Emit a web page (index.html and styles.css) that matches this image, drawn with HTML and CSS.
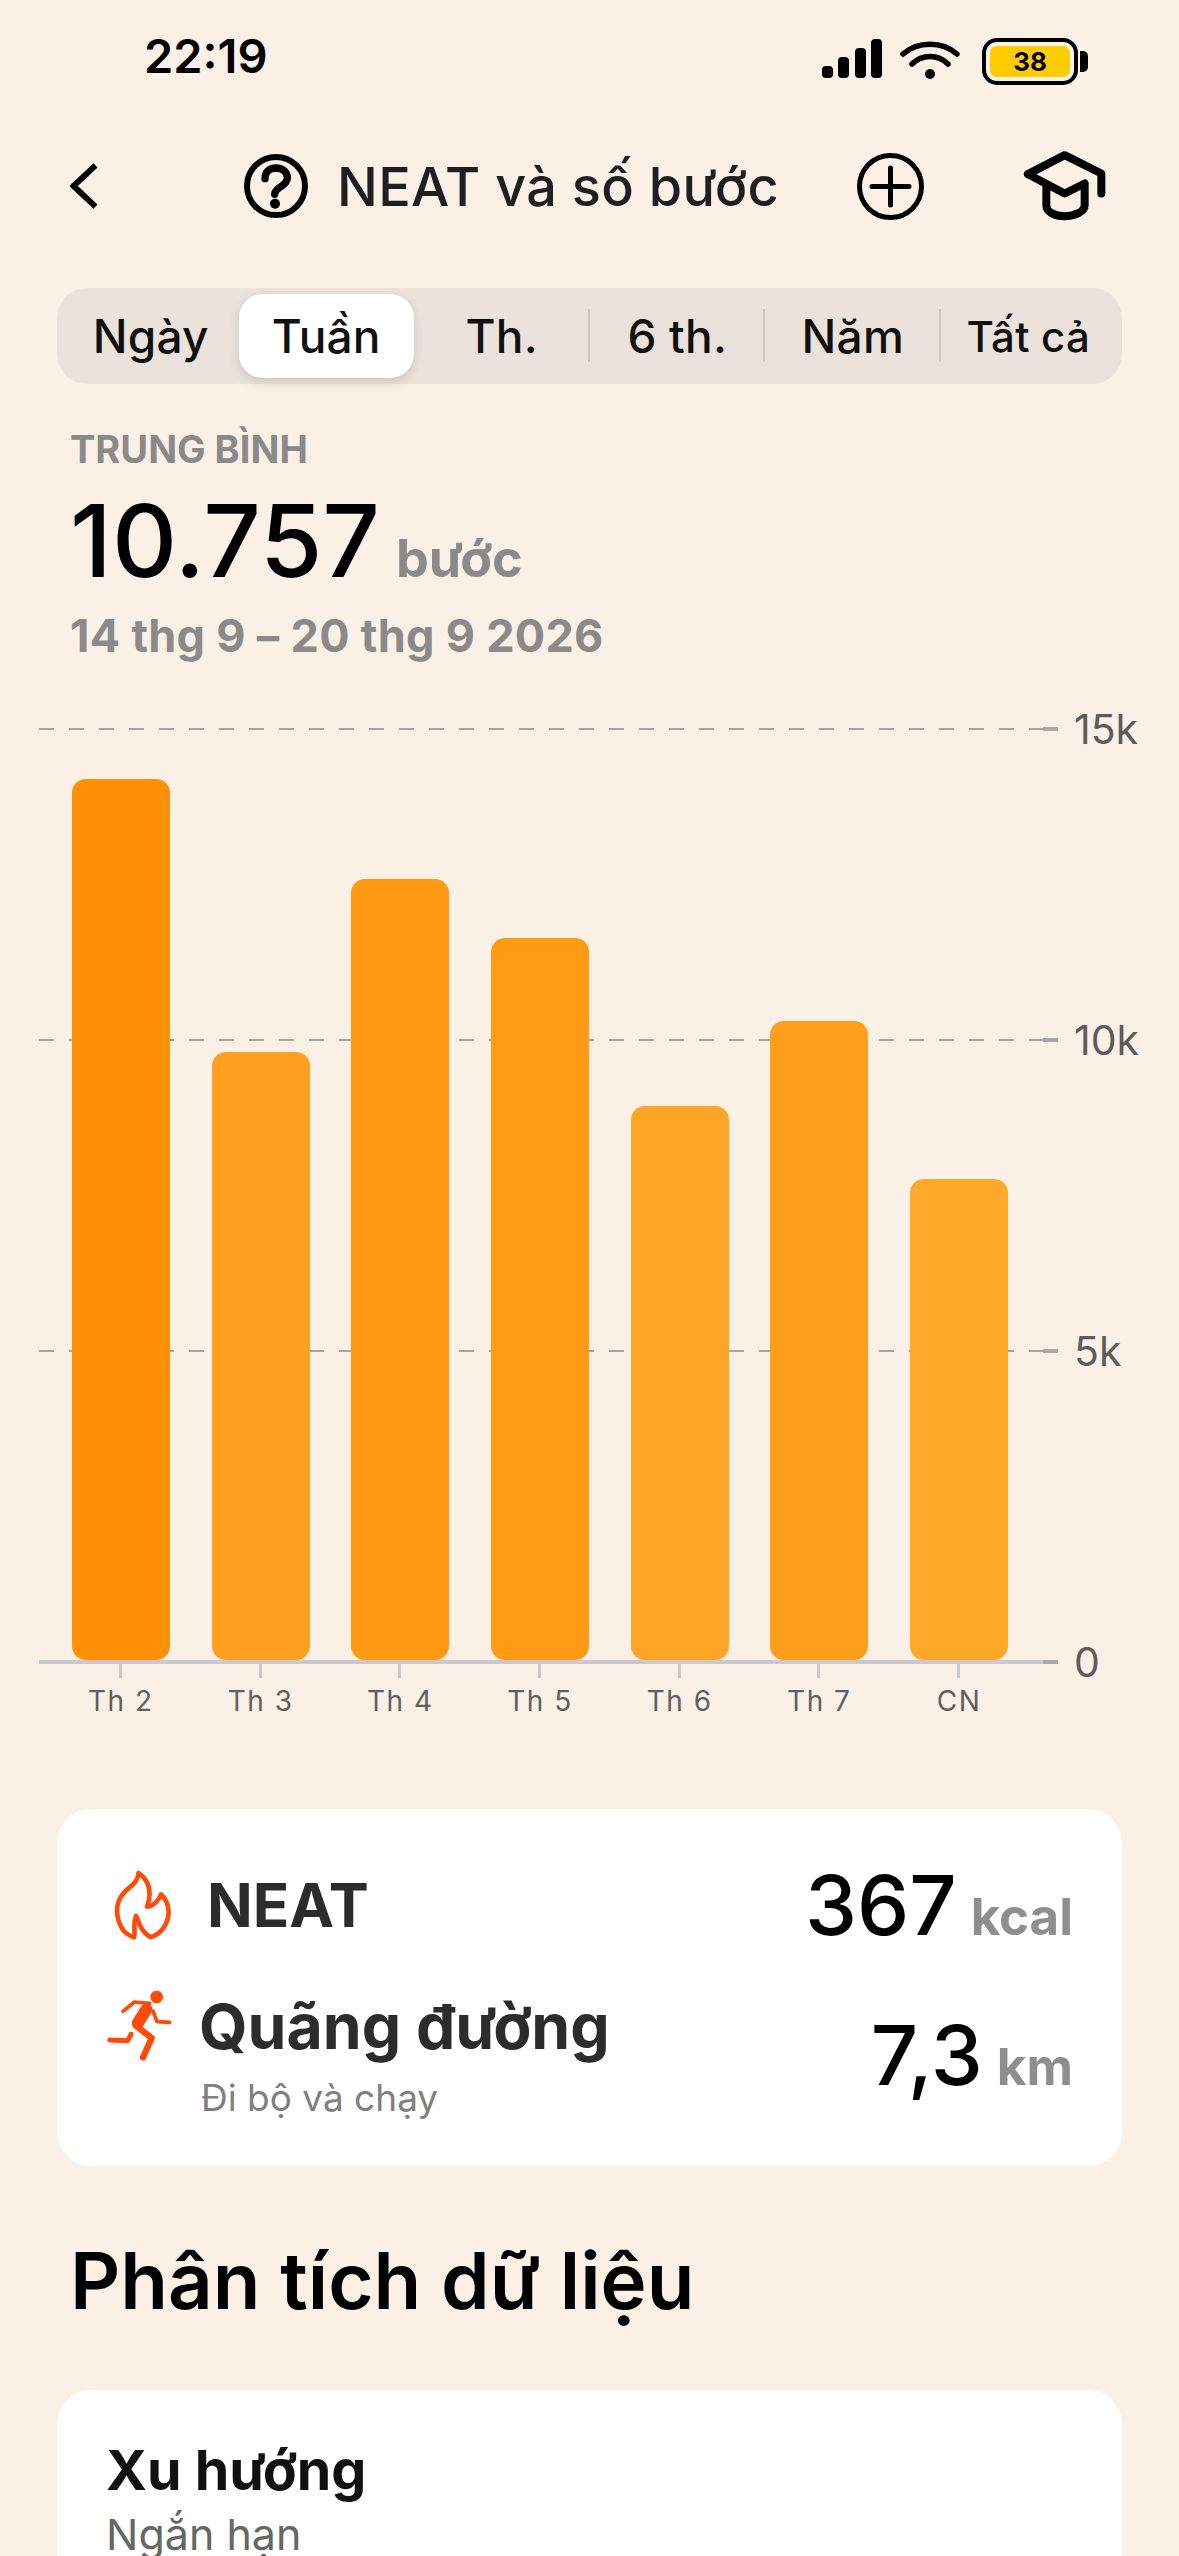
FILE: index.html
```html
<!DOCTYPE html>
<html lang="vi">
<head>
  <meta charset="UTF-8">
  <title>NEAT và số bước</title>
  <link rel="stylesheet" href="styles.css">
</head>
<body>

<div class="screen">

  <div class="status-bar">
    <span class="time">22:19</span>
    <svg class="signal" viewBox="0 0 60 39">
      <rect x="0" y="27" width="11" height="12" rx="4"/>
      <rect x="16" y="18" width="11" height="21" rx="4"/>
      <rect x="33" y="9" width="11" height="30" rx="4"/>
      <rect x="49" y="0" width="11" height="39" rx="4"/>
    </svg>
    <svg class="wifi" viewBox="0 0 60 40">
      <path d="M3 13 C18 0 42 0 57 13" fill="none" stroke="#000" stroke-width="5.5" stroke-linecap="round"/>
      <path d="M12 23 C22 13 38 13 48 23" fill="none" stroke="#000" stroke-width="5.5" stroke-linecap="round"/>
      <circle cx="30" cy="33" r="5"/>
    </svg>
    <div class="battery">
      <div class="battery-body"><div class="battery-fill">38</div></div>
      <div class="battery-cap"></div>
    </div>
  </div>

  <div class="nav">
    <svg class="nav-back" viewBox="90 55 84 140">
      <path d="M167 62 L100 125 L167 188" fill="none" stroke="#000" stroke-width="18"/>
    </svg>
    <svg class="nav-help" viewBox="612 11 192 192">
      <circle cx="708" cy="107" r="87" fill="none" stroke="#000" stroke-width="18"/>
      <path d="M675 85 C675 62 692 53 708 53 C728 53 742 66 742 82 C742 98 728 104 718 112 C708 120 704 124 704 132" fill="none" stroke="#000" stroke-width="22" stroke-linecap="round"/>
      <circle cx="705" cy="160" r="15"/>
    </svg>
    <span class="nav-title">NEAT và số bước</span>
    <svg class="nav-add" viewBox="0 0 67 67">
      <circle cx="33.5" cy="33.5" r="31" fill="none" stroke="#000" stroke-width="5"/>
      <path d="M33.5 15 V52 M15 33.5 H52" fill="none" stroke="#000" stroke-width="5" stroke-linecap="round"/>
    </svg>
    <svg class="nav-cap" viewBox="610 60 255 215">
      <path d="M625 132 L735 75 L845 130 V190" fill="none" stroke="#000" stroke-width="24" stroke-linecap="round" stroke-linejoin="round"/>
      <path d="M625 132 L735 190 L795 160 V225 C795 245 765 258 735 258 C705 258 680 245 680 225 V165" fill="none" stroke="#000" stroke-width="24" stroke-linecap="round" stroke-linejoin="round"/>
    </svg>
  </div>

  <div class="segments">
    <div class="seg">Ngày</div>
    <div class="seg seg-active">Tuần</div>
    <div class="seg seg-split">Th.</div>
    <div class="seg seg-split">6 th.</div>
    <div class="seg seg-split">Năm</div>
    <div class="seg seg-small">Tất cả</div>
  </div>

  <div class="summary">
    <div class="summary-label">TRUNG BÌNH</div>
    <div class="summary-value">10.757<span class="summary-unit">bước</span></div>
    <div class="summary-date">14 thg 9 – 20 thg 9 2026</div>
  </div>

  <div class="chart">
    <div class="plot">
      <div class="y-axis">
        <div class="y-row"><div class="y-line"></div><div class="y-tick"></div><span class="y-label">15k</span></div>
        <div class="y-row"><div class="y-line"></div><div class="y-tick"></div><span class="y-label">10k</span></div>
        <div class="y-row"><div class="y-line"></div><div class="y-tick"></div><span class="y-label">5k</span></div>
        <div class="y-row"><div class="y-line y-base"></div><div class="y-tick"></div><span class="y-label">0</span></div>
      </div>
      <div class="bars">
        <div class="bar" style="height: 94.6%; background: #ff9008"></div>
        <div class="bar" style="height: 65.3%; background: #ffa020"></div>
        <div class="bar" style="height: 83.9%; background: #ff9a12"></div>
        <div class="bar" style="height: 77.6%; background: #ff9b14"></div>
        <div class="bar" style="height: 59.5%; background: #ffa526"></div>
        <div class="bar" style="height: 68.6%; background: #ff9e1a"></div>
        <div class="bar" style="height: 51.7%; background: #ffa82a"></div>
      </div>
    </div>
    <div class="x-axis">
      <div class="x-item">Th 2</div>
      <div class="x-item">Th 3</div>
      <div class="x-item">Th 4</div>
      <div class="x-item">Th 5</div>
      <div class="x-item">Th 6</div>
      <div class="x-item">Th 7</div>
      <div class="x-item">CN</div>
    </div>
  </div>

  <div class="stat-card">
    <div class="stat-row">
      <div class="stat-left">
        <svg class="icon-flame" viewBox="160 90 175 210">
          <path d="M234 98 C232 130 205 140 190 158 C172 178 166 205 171 230 C177 262 195 285 220 292 C226 275 216 255 226 228 C238 250 240 275 270 292 C300 285 322 255 325 220 C325 195 315 175 302 163 C295 180 280 198 260 200 C272 165 272 125 234 98 Z" fill="none" stroke="#ff4a0a" stroke-width="14" stroke-linejoin="round"/>
        </svg>
        <span class="stat-name">NEAT</span>
      </div>
      <div class="stat-value">367<span class="stat-unit">kcal</span></div>
    </div>
    <div class="stat-row stat-row-second">
      <div class="stat-left stat-left-top">
        <svg class="icon-run" viewBox="140 455 195 210">
          <circle cx="289" cy="473" r="19" fill="#ff4a0a"/>
          <path d="M258 510 L232 552" fill="none" stroke="#ff4a0a" stroke-width="36" stroke-linecap="round"/>
          <path d="M268 492 L222 488 L188 516" fill="none" stroke="#ff4a0a" stroke-width="11" stroke-linecap="round" stroke-linejoin="round"/>
          <path d="M278 515 L290 547 L328 549" fill="none" stroke="#ff4a0a" stroke-width="11" stroke-linecap="round" stroke-linejoin="round"/>
          <path d="M228 560 L274 596 L248 654" fill="none" stroke="#ff4a0a" stroke-width="19" stroke-linecap="round" stroke-linejoin="round"/>
          <path d="M212 585 L202 604 L148 602" fill="none" stroke="#ff4a0a" stroke-width="15" stroke-linecap="round" stroke-linejoin="round"/>
        </svg>
        <div>
          <div class="stat-name stat-name-long">Quãng đường</div>
          <div class="stat-sub">Đi bộ và chạy</div>
        </div>
      </div>
      <div class="stat-value stat-value-raised">7,3<span class="stat-unit">km</span></div>
    </div>
  </div>

  <h2 class="section-title">Phân tích dữ liệu</h2>

  <div class="trend-card">
    <div class="trend-title">Xu hướng</div>
    <div class="trend-sub">Ngắn hạn</div>
  </div>

</div>

</body>
</html>
```

FILE: styles.css
```css
body {
  font-family: Inter, "Noto Sans", sans-serif;
  background: #faf0e6;
  margin: 0;
  color: #000;
}

.screen {
  width: 1179px;
  height: 2556px;
  overflow: hidden;
}

/* status bar */
.status-bar {
  height: 142px;
  box-sizing: border-box;
  padding-top: 38px;
  display: flex;
  align-items: flex-start;
}

.time {
  margin-left: 144px;
  width: 678px;
  font-size: 47px;
  line-height: 35px;
  font-weight: 600;
}

.signal {
  width: 60px;
  height: 39px;
  margin-top: 1px;
}

.wifi {
  width: 60px;
  height: 40px;
  margin-left: 18px;
  margin-top: 3px;
}

.battery {
  display: flex;
  align-items: center;
  margin-left: 22px;
}

.battery-body {
  width: 96px;
  height: 47px;
  box-sizing: border-box;
  border: 4px solid #000;
  border-radius: 15px;
  padding: 4px;
}

.battery-fill {
  height: 31px;
  background: #ffcc00;
  border-radius: 7px;
  text-align: center;
  font-size: 26px;
  line-height: 31px;
  font-weight: 700;
}

.battery-cap {
  width: 8px;
  height: 21px;
  margin-left: 2px;
  background: #000;
  border-radius: 0 5px 5px 0;
}

/* nav */
.nav {
  height: 88px;
  display: flex;
  align-items: center;
  padding-left: 70px;
}

.nav-back {
  width: 28px;
  height: 46px;
}

.nav-help {
  width: 64px;
  height: 64px;
  margin-left: 146px;
}

.nav-title {
  margin-left: 29px;
  width: 441px;
  font-size: 54px;
  letter-spacing: 0.3px;
  font-weight: 500;
  color: #1f1f22;
  white-space: nowrap;
}

.nav-add {
  width: 67px;
  height: 67px;
  margin-left: 79px;
}

.nav-cap {
  width: 85px;
  height: 72px;
  margin-left: 99px;
}

/* segmented control */
.segments {
  margin: 58px 57px 0;
  height: 96px;
  box-sizing: border-box;
  padding: 6px;
  display: grid;
  grid-template-columns: repeat(6, 1fr);
  background: #ebe3db;
  border-radius: 30px;
}

.seg {
  position: relative;
  display: flex;
  align-items: center;
  justify-content: center;
  font-size: 46px;
  letter-spacing: 0.2px;
  font-weight: 500;
  color: #111;
}

.seg-active {
  background: #fff;
  border-radius: 24px;
  box-shadow: 0 4px 12px rgba(0, 0, 0, 0.13);
}

.seg-split::after {
  content: "";
  position: absolute;
  right: 0;
  top: 15px;
  width: 2px;
  height: 53px;
  background: #d0c9c2;
}

.seg-small {
  font-size: 42px;
}

/* summary */
.summary {
  margin-top: 43px;
  padding-left: 70px;
}

.summary-label {
  font-size: 38px;
  line-height: 44px;
  font-weight: 700;
  color: #8a8a8a;
}

.summary-value {
  height: 110px;
  margin-top: 14px;
  font-size: 101px;
  line-height: 110px;
  font-weight: 500;
}

.summary-unit {
  margin-left: 16px;
  font-size: 52px;
  line-height: 0;
  font-weight: 700;
  color: #8a8a8a;
}

.summary-date {
  margin-top: 16px;
  font-size: 45px;
  line-height: 50px;
  letter-spacing: 0.3px;
  font-weight: 700;
  color: #8a8a8a;
}

/* chart */
.chart {
  margin-top: 68px;
  padding-left: 39px;
}

.plot {
  position: relative;
  height: 933px;
}

.y-axis {
  position: absolute;
  top: 0;
  bottom: 0;
  left: 0;
  right: 0;
  display: flex;
  flex-direction: column;
  justify-content: space-between;
}

.y-row {
  height: 0;
  display: flex;
  align-items: center;
}

.y-line {
  width: 1004px;
  height: 2px;
  background: repeating-linear-gradient(to right, #a8a3a0 0, #a8a3a0 15px, transparent 15px, transparent 30px);
}

.y-base {
  height: 4px;
  background: #cdc8d0;
}

.y-tick {
  width: 15px;
  height: 4px;
  background: #aaa7a6;
}

.y-label {
  margin-left: 16px;
  font-size: 41px;
  color: #5c5c5c;
}

.bars {
  position: relative;
  height: 931px;
  padding-left: 33px;
  display: flex;
  align-items: flex-end;
  gap: 41.7px;
}

.bar {
  width: 98px;
  border-radius: 14px;
}

.x-axis {
  padding-left: 12px;
  display: flex;
}

.x-item {
  width: 139.7px;
  padding-top: 17px;
  text-align: center;
  font-size: 28px;
  line-height: 44px;
  letter-spacing: 1.5px;
  color: #5f5f5f;
  position: relative;
}

.x-item::before {
  content: "";
  position: absolute;
  top: 2px;
  left: 68px;
  width: 3px;
  height: 14px;
  background: #cdc8d0;
}

/* stat card */
.stat-card {
  margin: 86px 57px 0;
  height: 357px;
  box-sizing: border-box;
  padding: 40px 49px 46px 50px;
  background: #fff;
  border-radius: 34px;
}

.stat-row {
  height: 112px;
  display: flex;
  align-items: center;
  justify-content: space-between;
}

.stat-row-second {
  height: 129px;
  margin-top: 30px;
}

.stat-left {
  display: flex;
  align-items: center;
}

.stat-left-top {
  align-items: flex-start;
}

.icon-flame {
  width: 58px;
  height: 70px;
  margin-left: 7px;
  margin-right: 35px;
}

.icon-run {
  width: 65px;
  height: 70px;
  margin-right: 27px;
}

.stat-name {
  font-size: 60px;
  line-height: 70px;
  font-weight: 700;
  color: #2c2c2c;
}

.stat-name-long {
  font-size: 62.5px;
}

.stat-sub {
  margin-top: 15px;
  margin-left: 2px;
  font-size: 37px;
  line-height: 44px;
  color: #808080;
}

.stat-value {
  font-size: 83px;
  line-height: 90px;
  font-weight: 500;
  white-space: nowrap;
}

.stat-value-raised {
  margin-bottom: 2px;
}

.stat-unit {
  margin-left: 14px;
  font-size: 51px;
  line-height: 0;
  font-weight: 700;
  color: #8e8e8e;
}

/* bottom section */
.section-title {
  margin: 70px 0 0 70px;
  font-size: 78px;
  line-height: 90px;
  font-weight: 600;
}

.trend-card {
  margin: 64px 57px 0;
  height: 300px;
  box-sizing: border-box;
  padding: 50px 49px 0;
  background: #fff;
  border-radius: 34px;
}

.trend-title {
  font-size: 55.5px;
  line-height: 60px;
  font-weight: 700;
  color: #111;
}

.trend-sub {
  margin-top: 9px;
  font-size: 43px;
  line-height: 50px;
  color: #666;
}
```
